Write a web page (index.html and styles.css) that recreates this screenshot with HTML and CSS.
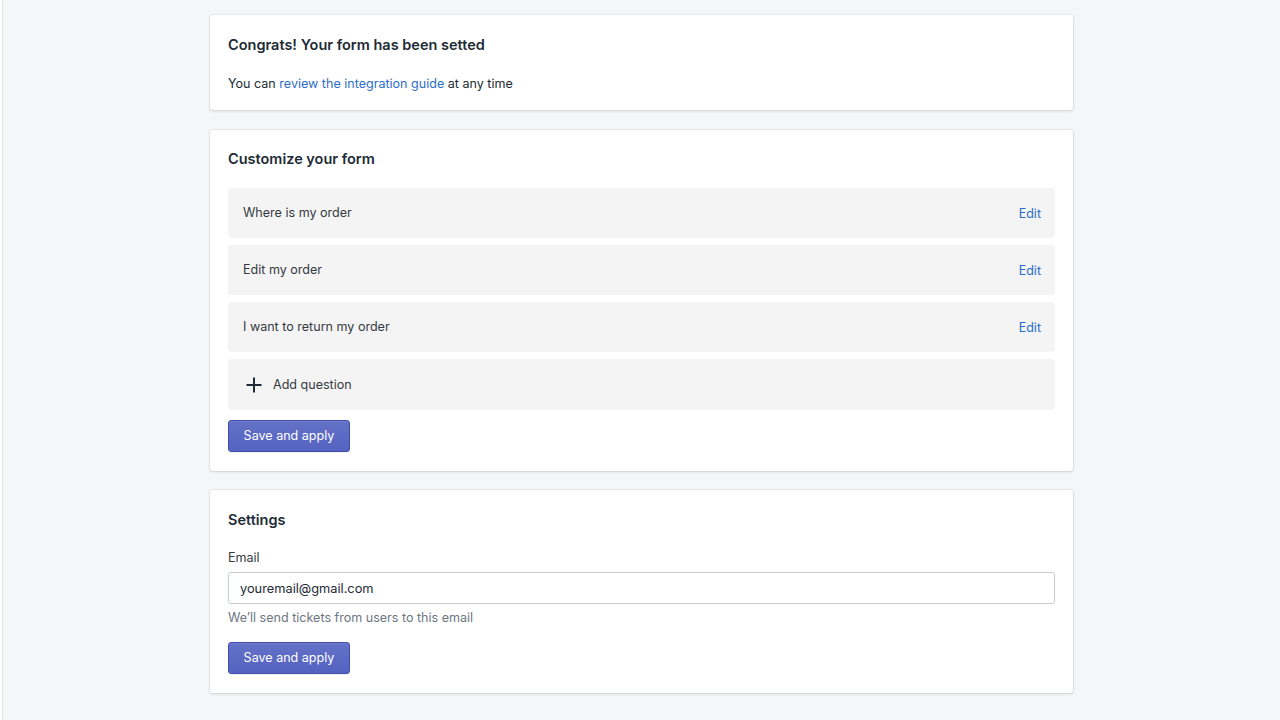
FILE: index.html
```html
<!DOCTYPE html>
<html lang="en">
<head>
<meta charset="utf-8">
<title>Form settings</title>
<link rel="stylesheet" href="styles.css">
</head>
<body>
<main class="page">
  <section class="card card-congrats">
    <h2 class="card-title">Congrats! Your form has been setted</h2>
    <p class="card-text">You can <a class="link" href="#">review the integration guide</a> at any time</p>
  </section>

  <section class="card card-customize">
    <h2 class="card-title">Customize your form</h2>
    <ul class="questions">
      <li class="question"><span class="question-label">Where is my order</span><a class="link edit" href="#">Edit</a></li>
      <li class="question"><span class="question-label">Edit my order</span><a class="link edit" href="#">Edit</a></li>
      <li class="question"><span class="question-label">I want to return my order</span><a class="link edit" href="#">Edit</a></li>
      <li class="question question-add">
        <svg class="plus" width="18" height="18" viewBox="0 0 18 18" aria-hidden="true"><path d="M9 1.5v15M1.5 9h15" stroke="#212b36" stroke-width="2" stroke-linecap="butt" fill="none"/></svg>
        <span class="question-label">Add question</span>
      </li>
    </ul>
    <button class="btn-primary" type="button">Save and apply</button>
  </section>

  <section class="card card-settings">
    <h2 class="card-title">Settings</h2>
    <label class="field-label" for="email">Email</label>
    <input class="field-input" id="email" type="text" value="youremail@gmail.com">
    <p class="field-help">We’ll send tickets from users to this email</p>
    <button class="btn-primary" type="button">Save and apply</button>
  </section>
</main>
</body>
</html>
```

FILE: styles.css
```css
html {
  background: #ffffff;
}
body {
  margin: 0 0 0 2px;
  min-height: 720px;
  background: #f4f6f8;
  border-left: 1px solid #e1e4e8;
  font-family: Inter, "Noto Sans", "Liberation Sans", sans-serif;
  font-size: 12.55px;
  line-height: 20px;
  color: #212b36;
}
.page {
  width: 863px;
  margin: 0 auto;
  padding-top: 15px;
  display: flex;
  flex-direction: column;
  gap: 20px;
}
.card {
  background: #ffffff;
  border-radius: 3px;
  box-shadow: 0 0 0 1px rgba(63, 63, 68, 0.06), 0 1px 3px 0 rgba(63, 63, 68, 0.15);
  display: flex;
  flex-direction: column;
  align-items: flex-start;
}
.card-congrats {
  padding: 20px 18px 16px;
}
.card-customize {
  padding: 19px 18px 19px;
}
.card-settings {
  margin-top: -1px;
  padding: 20px 18px 19px;
}
.card-title {
  margin: 0;
  font-size: 14.5px;
  font-weight: 600;
  line-height: 20px;
}
.card-text {
  margin: 19px 0 0;
}
.link {
  color: #2c6ecb;
  text-decoration: none;
}
.questions {
  list-style: none;
  margin: 19px 0 0;
  padding: 0;
  align-self: stretch;
  display: flex;
  flex-direction: column;
  gap: 7px;
}
.question {
  height: 50px;
  background: #f4f4f4;
  border-radius: 4px;
  display: flex;
  align-items: center;
  justify-content: space-between;
  padding: 0 14px 0 15px;
  color: #343a42;
}
.question-add {
  height: 51px;
  justify-content: flex-start;
  padding-left: 17px;
  gap: 10px;
}
.question-add .question-label {
  padding-top: 1px;
}
.plus {
  display: block;
}
.edit {
  padding-top: 2px;
}
.btn-primary {
  margin-top: 10px;
  width: 122px;
  height: 32px;
  padding: 0;
  border: 1px solid #3f4eae;
  border-radius: 3px;
  background: linear-gradient(180deg, #6371c7, #5563c1);
  box-shadow: inset 0 1px 0 0 #6f7bcb, 0 1px 0 0 rgba(22, 29, 37, 0.05);
  color: #ffffff;
  font-family: inherit;
  font-size: 12.55px;
  line-height: 20px;
  cursor: pointer;
}
.field-label {
  margin-top: 18px;
  color: #343a42;
}
.field-input {
  margin-top: 4px;
  align-self: stretch;
  box-sizing: border-box;
  height: 32px;
  padding: 0 11px;
  border: 1px solid #c4cdd5;
  border-radius: 3px;
  font-family: inherit;
  font-size: 12.8px;
  color: #212b36;
  background: #ffffff;
}
.field-help {
  margin: 4px 0 0;
  color: #6d7681;
}
.card-settings .btn-primary {
  margin-top: 14px;
}
```
